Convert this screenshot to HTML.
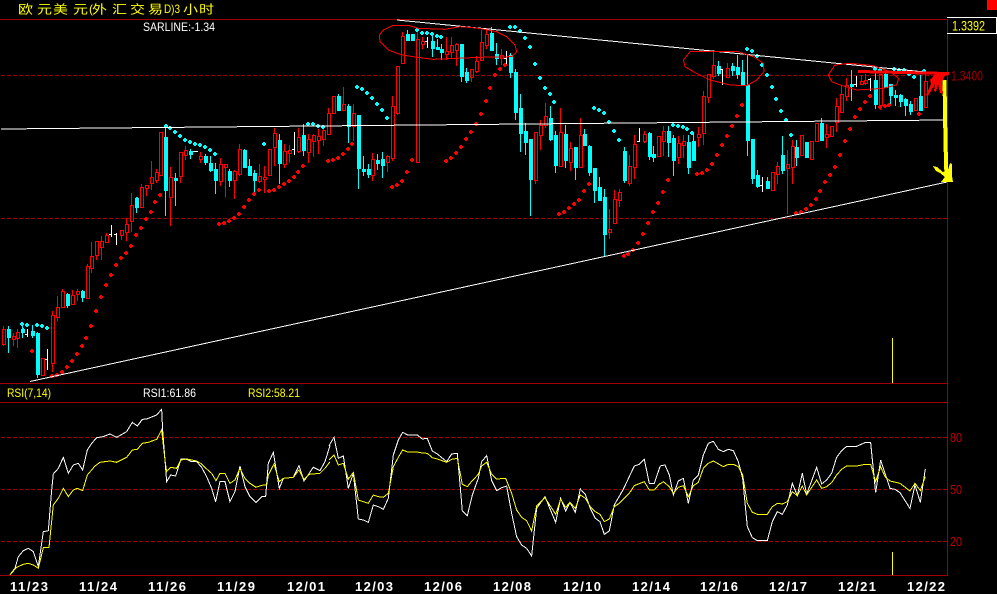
<!DOCTYPE html>
<html><head><meta charset="utf-8"><style>
html,body{margin:0;padding:0;background:#000;width:997px;height:594px;overflow:hidden}
svg{position:absolute;left:0;top:0;display:block}
text{font-family:"Liberation Sans",sans-serif;font-size:12px}
.d{font-weight:bold;font-size:13px;fill:#fff}
.l{shape-rendering:crispEdges}
</style></head><body>
<svg id="s" width="997" height="594" viewBox="0 0 997 594" xmlns="http://www.w3.org/2000/svg">
<rect width="997" height="594" fill="#000"/>
<rect x="987" y="0" width="10" height="10" fill="#f00"/>
<g class="l" stroke="#a00000" stroke-width="1" fill="none">
<path d="M0 19.5H947M0 383.5H947M0 402.5H947M0 575.5H947M947.5 19V576"/>
<path stroke-dasharray="4 2" d="M1 75.5H947M1 218.5H947M1 437.5H947M1 489.5H947M1 541.5H947"/>
</g>
<path class="l" d="M947 17.5H996.5V33.5H947" fill="none" stroke="#fff"/>
<text x="952" y="30.5" fill="#ff0" textLength="33" lengthAdjust="spacingAndGlyphs" style="font-size:13.5px">1.3392</text>
<text x="951" y="80.5" fill="#a00000" textLength="32" lengthAdjust="spacingAndGlyphs" style="font-size:13.5px">1.3400</text>
<text x="950" y="442" fill="#c00000" textLength="12" lengthAdjust="spacingAndGlyphs" style="font-size:13px">80</text>
<text x="950" y="494" fill="#c00000" textLength="12" lengthAdjust="spacingAndGlyphs" style="font-size:13px">50</text>
<text x="950" y="546" fill="#c00000" textLength="12" lengthAdjust="spacingAndGlyphs" style="font-size:13px">20</text>
<path class="l" d="M892.5 338V383M892.5 552V575" stroke="#ff0" fill="none"/>
<g id="c"></g>
<g class="l" fill="none" stroke="#fff">
<path d="M1 129L946 120"/>
<path d="M397 20L925 72"/>
<path d="M30 381.5L947 182"/>
</g>
<g fill="none" stroke="#f00" stroke-width="1" class="l">
<g transform="translate(330,0) scale(.3333)"><polyline vector-effect="non-scaling-stroke" points="148,105 160,90 190,76 235,76 265,85 345,88 390,80 440,84 500,95 530,110 555,135 560,155 545,170 450,172 310,178 285,175 215,165 175,150 150,125 148,105"/></g>
<g transform="translate(660,0) scale(.3333)"><polyline vector-effect="non-scaling-stroke" points="70,180 90,155 130,155 175,155 235,155 280,170 310,190 312,215 290,240 260,257 210,255 150,240 100,215 75,200 70,180"/><polyline vector-effect="non-scaling-stroke" points="505,225 525,195 570,190 640,197 690,215 716,235 710,255 670,265 590,270 540,255 515,245 505,225"/></g>
</g>
<g class="l">
<path fill="none" stroke="#ff0" stroke-width="4" d="M944.5 80L945 112L945.5 143L946.5 178"/>
<path fill="#ff0" d="M933 166L937 167L943 172L948 170L950 163L952 164L952 176L953 182L941 182L945 177L940 173L936 171Z"/>
<path fill="none" stroke="#f00" stroke-width="3" d="M858 71.5L949 73.5"/>
<path fill="#f00" d="M936 73L946 73L942 82L943 94L940 93L938 84L936 92L934 91L935 84L928 96L926 95L931 84L930 80Z"/>
</g>
<g fill="none" stroke-width="1" class="l">
<g transform="translate(0,380) scale(.3333)">
<polyline vector-effect="non-scaling-stroke" stroke="#fff" points="30,584 45,565 55,530 70,512 85,505 100,515 115,560 130,455 145,452 155,330 160,282 175,265 190,232 205,280 220,255 235,250 248,270 262,210 275,190 290,173 310,170 330,162 350,172 380,155 397,127 412,138 427,118 440,117 470,105 485,88 488,150 500,305 512,285 527,288 543,237 560,238 575,245 590,245 605,262 620,290 635,325 647,365 660,305 675,305 690,365 705,335 720,258 735,320 750,350 768,368 785,350 797,350 805,250 820,217 838,325 850,295 880,292 897,257 912,303 940,262 960,272 975,245 990,197"/>
<polyline vector-effect="non-scaling-stroke" stroke="#ff0" points="30,584 50,562 70,553 85,550 100,555 115,565 130,503 147,502 160,375 175,355 190,325 205,350 220,330 232,325 248,332 262,285 285,258 300,247 330,243 350,247 380,232 397,210 412,208 427,190 445,187 470,178 485,150 495,240 500,275 512,262 530,265 543,240 560,237 590,243 605,252 620,267 635,280 648,302 660,280 675,280 690,310 705,300 720,265 735,295 750,310 768,322 785,316 800,315 805,285 822,252 838,305 850,295 880,292 897,270 912,298 928,283 960,280 975,265 990,245"/>
</g>
<g transform="translate(330,380) scale(.3333)">
<polyline vector-effect="non-scaling-stroke" stroke="#fff" points="-3,197 12,172 25,235 40,228 55,325 70,280 85,417 100,420 115,427 130,375 145,380 160,388 175,355 190,225 205,180 218,157 233,165 262,165 277,177 292,175 307,213 322,222 350,245 365,222 382,220 397,393 412,407 427,345 445,295 455,245 470,227 485,302 500,332 515,323 530,318 545,400 560,470 575,495 590,505 605,528 620,385 645,350 677,427 692,355 707,393 720,367 736,397 751,327 766,343 781,385 796,415 810,425 823,463 838,453 853,375 880,328 913,258 928,253 943,238 958,310 973,310 990,260"/>
<polyline vector-effect="non-scaling-stroke" stroke="#ff0" points="-3,240 12,225 25,255 40,250 55,297 70,277 85,360 100,365 115,370 130,345 145,350 160,352 175,340 190,260 205,232 218,210 233,216 262,216 277,219 292,220 307,233 322,237 350,247 365,238 382,235 397,313 412,320 427,302 445,283 455,258 470,247 485,283 500,297 527,295 545,340 560,390 575,412 590,422 605,453 620,378 645,353 677,403 692,358 707,382 720,367 736,385 751,345 766,355 781,380 796,395 810,403 823,425 838,417 853,380 868,370 900,337 913,317 943,305 958,330 973,330 990,310"/>
</g>
<g transform="translate(660,380) scale(.3333)">
<polyline vector-effect="non-scaling-stroke" stroke="#fff" points="0,258 15,255 28,285 40,345 55,303 70,295 85,370 100,300 115,285 130,225 145,190 160,184 175,208 190,215 205,208 220,212 235,245 248,295 262,440 277,473 292,482 322,482 337,425 352,395 367,403 382,375 397,310 412,347 427,280 440,343 470,262 485,312 500,300 515,280 530,232 545,212 560,199 590,199 615,188 632,188 647,338 662,240 690,325 705,328 720,338 750,385 765,315 781,367 796,267"/>
<polyline vector-effect="non-scaling-stroke" stroke="#ff0" points="0,312 10,305 28,320 40,340 55,322 70,317 85,350 100,317 115,307 130,265 145,250 160,243 190,260 205,253 220,253 235,260 248,285 262,370 277,397 292,403 322,403 337,380 352,370 367,372 382,365 397,335 412,347 427,318 440,345 470,300 485,325 500,320 515,308 530,285 545,268 560,258 590,258 615,253 632,253 647,305 662,260 675,290 690,303 720,310 750,333 765,310 781,332 796,290"/>
</g>
</g>
<g transform="scale(1.25,1)"><text y="13.5" x="14.4 29.6 42.4 58.4 73.6 89.6 104 118.4 146.4 159.2" fill="#ff0" style="font-family:'Liberation Sans','WenQuanYi Zen Hei','Noto Sans CJK SC',sans-serif;font-size:12px">欧元美元外汇交易小时</text></g>
<text x="89" y="13" fill="#ff0" style="font-size:12px">(</text>
<text x="164" y="13" fill="#ff0" textLength="16" lengthAdjust="spacingAndGlyphs" style="font-size:12px">D)3</text>
<text x="143" y="31" fill="#fff" textLength="72" lengthAdjust="spacingAndGlyphs">SARLINE:-1.34</text>
<text x="7" y="397" fill="#ff0" textLength="44" lengthAdjust="spacingAndGlyphs">RSI(7,14)</text>
<text x="143" y="397" fill="#fff" textLength="53" lengthAdjust="spacingAndGlyphs">RSI1:61.86</text>
<text x="248" y="397" fill="#ff0" textLength="52" lengthAdjust="spacingAndGlyphs">RSI2:58.21</text>
<text class="d" y="591" x="10" textLength="38">11/23</text>
<text class="d" y="591" x="79" textLength="38">11/24</text>
<text class="d" y="591" x="148" textLength="38">11/26</text>
<text class="d" y="591" x="217" textLength="38">11/29</text>
<text class="d" y="591" x="287" textLength="38">12/01</text>
<text class="d" y="591" x="355" textLength="38">12/03</text>
<text class="d" y="591" x="424" textLength="38">12/06</text>
<text class="d" y="591" x="493" textLength="38">12/08</text>
<text class="d" y="591" x="563" textLength="38">12/10</text>
<text class="d" y="591" x="632" textLength="38">12/14</text>
<text class="d" y="591" x="700" textLength="38">12/16</text>
<text class="d" y="591" x="769" textLength="38">12/17</text>
<text class="d" y="591" x="838" textLength="38">12/21</text>
<text class="d" y="591" x="907" textLength="38">12/22</text>
</svg>
<script>
var D="r326,329,344,345 c326,329,337,352 r333,336,339,345 r329,332,338,347 c323,329,332,337 w329,334,336,336 c325,331,335,337 c332,333,374,377 r358,358,375,375 w349,359,369,369 r311,315,363,371 r296,307,317,320 r289,291,307,307 c293,294,305,307 r290,295,304,304 r289,291,294,300 c290,291,297,301 r264,266,298,298 r242,256,268,272 r241,241,255,259 r236,241,247,259 r233,235,242,242 w225,234,236,236 w233,234,244,244 r230,230,235,239 r218,224,232,240 r193,205,221,231 c197,199,207,212 r184,187,207,207 r185,185,188,195 r161,177,183,189 r169,172,180,182 r132,132,175,175 c128,137,190,215 r167,177,197,225 c173,178,180,205 r152,152,176,182 r146,150,155,159 c149,151,154,158 w151,151,151,151 r152,156,159,162 c154,156,162,164 c156,163,170,171 c163,169,180,193 r158,164,181,185 r164,164,167,196 c169,171,180,186 r170,171,180,198 r144,149,174,175 c149,150,167,167 c159,166,175,175 c170,173,180,194 r164,176,181,182 r166,177,179,192 r149,149,175,175 r128,133,147,165 c134,140,163,183 r144,151,164,167 r145,150,153,162 w132,149,154,154 r128,137,151,152 c124,135,150,155 r134,139,152,162 r134,135,141,156 r129,136,140,153 r126,130,139,145 r108,113,134,134 r96,96,113,113 c94,96,110,110 r87,104,110,110 c104,106,126,142 r104,113,126,140 c115,115,168,188 c156,169,171,175 c164,169,174,177 r153,159,175,180 c154,160,163,169 c152,159,165,177 r155,156,162,171 r96,106,158,160 r66,66,113,114 r32,36,63,63 c30,34,40,40 c34,34,40,40 r30,39,162,162 r37,41,44,48 w37,41,47,47 c36,41,48,56 c39,47,49,49 c44,49,52,59 r37,51,54,59 r37,45,52,58 r43,44,50,65 c44,44,76,81 c68,72,80,82 r69,69,77,81 r56,61,71,72 r30,42,60,60 r28,34,45,48 c27,33,50,50 c43,54,58,64 r49,55,58,64 w51,58,64,64 c53,55,72,77 c69,72,112,119 c94,108,133,151 c123,131,142,154 c139,139,179,215 r132,132,180,183 r120,125,135,149 r103,116,125,127 c106,118,139,140 c131,135,165,172 r108,132,166,166 c125,134,160,167 r142,148,162,170 c147,147,167,179 r118,135,167,167 c129,134,145,145 c145,146,172,175 c168,168,190,202 c177,187,200,200 c189,197,234,256 r209,229,232,238 r190,199,223,223 r189,192,200,206 c147,151,180,182 r155,166,183,185 r135,144,167,178 w128,141,141,141 r131,134,141,142 c132,133,156,159 c146,154,157,161 r136,136,156,156 r126,131,141,155 c126,131,142,156 c135,138,160,175 r136,143,157,163 r135,141,145,157 c135,142,167,173 c132,141,160,160 r127,134,137,146 r91,96,133,144 r74,74,97,102 r50,65,76,78 c61,66,73,75 w69,69,84,84 r63,68,77,77 c63,66,70,75 c55,67,74,78 c60,72,85,85 c55,85,140,155 c139,139,178,183 c170,175,186,187 w177,185,191,191 c177,181,188,188 r172,172,190,190 r162,166,174,183 c136,155,170,173 r150,164,168,213 r140,146,167,183 c140,147,157,165 r135,135,155,155 c142,142,157,157 r141,141,159,159 r123,123,141,141 c118,123,140,140 r124,134,137,147 r126,126,136,136 r98,106,122,131 r86,94,112,112 r78,85,96,100 c70,84,86,100 w76,84,86,86 r75,81,84,84 r74,80,83,84 w78,79,90,90 c68,80,104,108 r74,74,105,109 c70,74,87,87 c84,84,95,104 c90,95,97,105 c94,95,101,106 c98,99,105,115 c101,104,111,114 r98,98,110,110 c75,96,110,110 r73,81,107,107".split(" ");
var CY="166,126 170,128 175,132 180,136 185,140 190,142 195,144 200,145 205,147 210,150 215,154 264,144 137,199 308,124 313,124 318,126 323,127 357,87 362,89 367,93 372,98 377,104 382,110 387,118 417,30 422,33 427,33 432,34 437,36 441,37 510,27 515,27 520,31 525,38 530,47 535,64 540,78 545,88 550,94 554,102 594,108 599,110 604,113 609,122 614,131 619,140 673,125 678,126 683,127 687,129 692,133 747,49 752,51 757,56 762,65 767,75 772,87 776,99 781,111 786,120 791,135 875,69 880,70 894,69 899,70 904,70 909,74 914,77 924,71 22,324 27,325 23,330 37,325 42,326 47,328";
var RD="32,351 52,376 57,375 62,372 67,367 72,361 77,354 82,346 86,338 91,326 96,311 101,297 106,285 111,275 116,265 121,258 126,253 131,246 136,235 141,228 146,219 151,212 155,202 160,195 219,224 224,223 229,221 234,218 239,214 244,207 249,200 254,194 259,190 269,191 274,190 279,187 284,184 289,181 294,177 298,172 303,166 328,161 333,160 338,158 343,154 348,149 352,144 392,187 397,185 402,181 407,172 412,160 446,161 451,158 456,153 461,147 466,139 471,132 476,124 481,114 486,101 490,88 495,75 500,69 505,65 559,214 564,212 569,208 574,204 579,200 584,191 589,184 624,256 628,254 633,250 638,243 643,234 648,223 653,212 658,203 663,192 668,180 697,174 702,173 707,170 712,164 717,155 722,145 727,136 732,126 737,116 742,105 796,213 801,212 806,209 811,205 816,199 820,191 825,182 830,175 835,167 840,155 845,141 850,129 855,117 860,109 865,102 870,96 880,107 885,106 889,105 919,114";
var o="";
function R(x,y,w,h,f){if(h<=0)return;o+='<rect x="'+x+'" y="'+y+'" width="'+w+'" height="'+h+'" fill="'+f+'"/>';}
for(var i=0;i<D.length;i++){var t=D[i][0],a=D[i].slice(1).split(",").map(Number),c=3.7+4.93*i,L=Math.round(c-2),W=L+1,
hi=a[0],tp=a[1],bt=a[2],lo=a[3];
if(t=="w"){R(W,hi,1,lo-hi+1,"#fff");R(W-2,tp,2,1,"#fff");if(hi==lo)R(W-2,tp,5,1,"#fff");continue;}
if(t=="c"){R(W,hi,1,lo-hi+1,"#0ff");R(L,tp,4,bt-tp+1,"#0ff");continue;}
R(W,hi,1,tp-hi,"#f00");R(W,bt,1,lo-bt+1,"#f00");
R(L,tp,4,1,"#f00");R(L,bt,4,1,"#f00");R(L,tp,1,bt-tp+1,"#f00");R(L+3,tp,1,bt-tp+1,"#f00");}
function P(s,f){s.split(" ").forEach(function(p){var q=p.split(",").map(Number);R(q[0]-2,q[1]-1,4,2,f);R(q[0]-1,q[1]-2,2,4,f);});}
P(CY,"#0ff");P(RD,"#f00");
document.getElementById("c").setAttribute("shape-rendering","crispEdges");
document.getElementById("c").innerHTML=o;
</script>
</body></html>
